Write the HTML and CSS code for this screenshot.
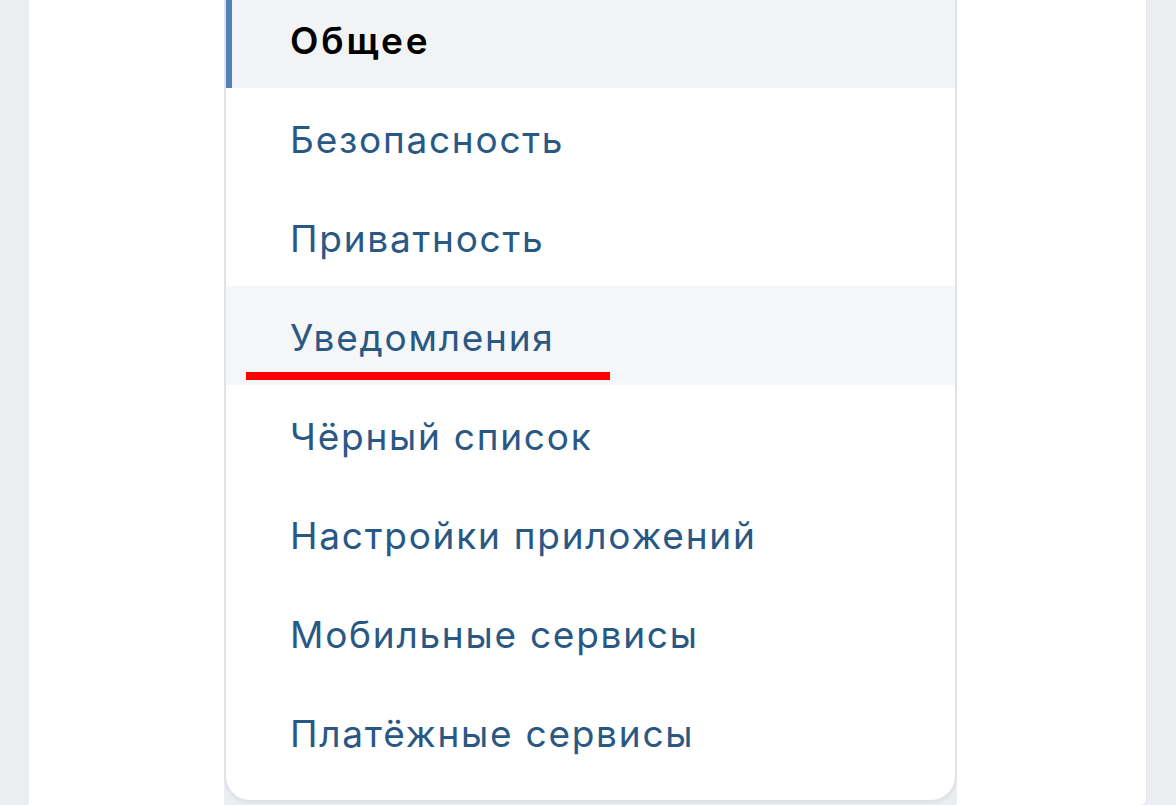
FILE: index.html
```html
<!DOCTYPE html>
<html lang="ru">

<head>
    <meta charset="UTF-8">
    <meta name="viewport" content="width=device-width, initial-scale=1.0">
    <title>Настройки</title>
    <link rel="stylesheet" href="styles.css">
</head>

<body>
    <div class="page">
        <div class="side side-left"></div>
        <div class="menu">
            <a class="menu-item active" href="#">Общее</a>
            <a class="menu-item" href="#">Безопасность</a>
            <a class="menu-item" href="#">Приватность</a>
            <a class="menu-item hover" href="#">Уведомления<span class="mark"></span></a>
            <a class="menu-item" href="#">Чёрный список</a>
            <a class="menu-item" href="#">Настройки приложений</a>
            <a class="menu-item" href="#">Мобильные сервисы</a>
            <a class="menu-item" href="#">Платёжные сервисы</a>
        </div>
        <div class="side side-right"></div>
    </div>
</body>

</html>
```

FILE: styles.css
```css
body {
    margin: 0;
    background-color: #ebedf0;
    font-family: Inter, "Liberation Sans", Arial, sans-serif;
    overflow: hidden;
}

.page {
    display: flex;
    margin-left: 29px;
    width: 1118px;
    height: 805px;
}

.side {
    background-color: #fff;
}

.side-left {
    width: 195px;
}

.side-right {
    flex: 1;
    border-right: 1px solid #e3e5e8;
    border-bottom-right-radius: 6px;
}

.menu {
    width: 729px;
    align-self: flex-start;
    margin-top: -11px;
    padding-bottom: 19px;
    background-color: #fff;
    border: 2px solid #dfe2e7;
    border-top: none;
    border-radius: 0 0 26px 26px;
    box-shadow: 0 2px 0 0 #e3e5e8;
}

.menu-item {
    position: relative;
    display: block;
    height: 99px;
    line-height: 103px;
    padding-left: 64px;
    font-size: 37px;
    letter-spacing: 1.75px;
    color: #2a5885;
    text-decoration: none;
}

.menu-item.active {
    padding-left: 58px;
    border-left: 6px solid #5181b8;
    background-color: #f2f3f5;
    color: #000;
    font-weight: 600;
    letter-spacing: 2.8px;
}

.menu-item.hover {
    background-color: #f5f6f8;
}

.mark {
    position: absolute;
    left: 20px;
    top: 86px;
    width: 364px;
    height: 8px;
    background-color: #ff0000;
}
```
